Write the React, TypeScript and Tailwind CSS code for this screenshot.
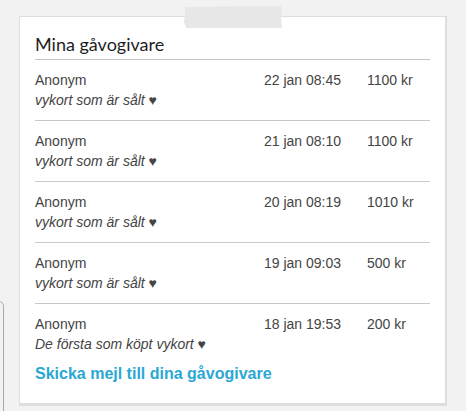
import React from "react";

const rows = [
  { date: "22 jan 08:45", amount: "1100 kr", msg: "vykort som är sålt" },
  { date: "21 jan 08:10", amount: "1100 kr", msg: "vykort som är sålt" },
  { date: "20 jan 08:19", amount: "1010 kr", msg: "vykort som är sålt" },
  { date: "19 jan 09:03", amount: "500 kr", msg: "vykort som är sålt" },
  { date: "18 jan 19:53", amount: "200 kr", msg: "De första som köpt vykort" },
];

export default function App() {
  return (
    <div className="relative w-[466px] h-[411px] overflow-hidden bg-[#f2f2f2] pt-[16px] pl-[19px]" style={{ fontFamily: '"Liberation Sans", Arial, sans-serif' }}>
      <div className="absolute left-[-20px] top-[301px] w-[24px] h-[200px] rounded-[5px] border border-[#a8a8a8] bg-[#f2f2f2]" />
      <div className="relative w-[428px] bg-white border border-[#dedede] border-r-2 border-b-[3px] px-[15px] pt-[14px] pb-[19px]">
        <div className="absolute left-[164px] top-[-11px] w-[98px] h-[22px] bg-[#e7e7e7] [clip-path:polygon(1%_4%,99%_0,100%_30%,99%_60%,100%_100%,2%_100%,0_70%,1%_40%)]" />
        <h2 className="text-[18px] leading-[26px] text-[#1e1e1e] border-b border-[#c4c4c4] pb-[2px]" style={{ fontFamily: 'Lato, "Open Sans", sans-serif' }}>
          Mina gåvogivare
        </h2>
        <div>
          {rows.map((r, i) => (
            <div key={i} className={"py-[10px] text-[14px] leading-[20px] text-[#444] " + (i < rows.length - 1 ? "border-b border-[#c8c8c8]" : "")}>
              <div className="grid grid-cols-[229px_103px_1fr]">
                <span>Anonym</span>
                <span>{r.date}</span>
                <span>{r.amount}</span>
              </div>
              <div className="italic">{r.msg} <span className="not-italic">♥</span></div>
            </div>
          ))}
        </div>
        <a className="block text-[16px] leading-[20px] font-bold text-[#2aa8d3]">Skicka mejl till dina gåvogivare</a>
      </div>
    </div>
  );
}
